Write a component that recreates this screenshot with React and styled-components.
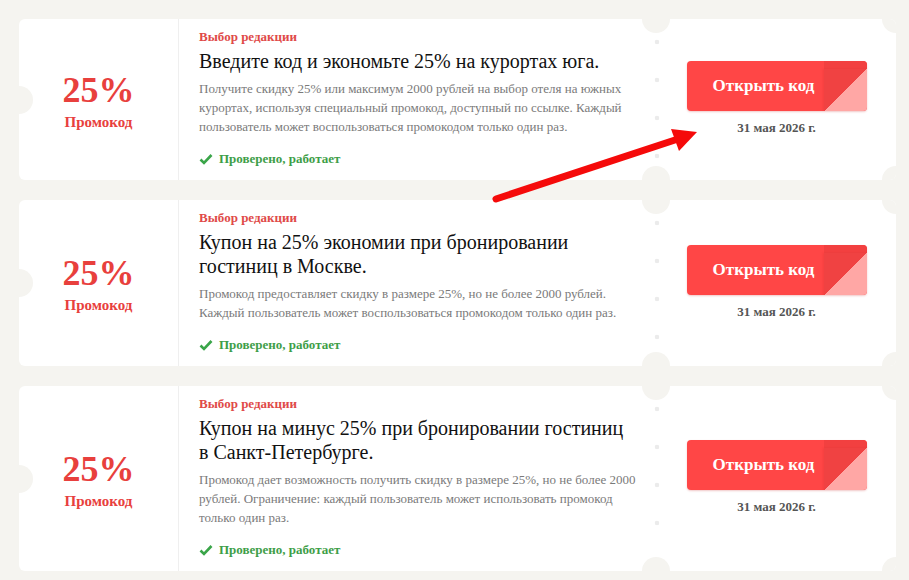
import React from "react";
import styled, { createGlobalStyle } from "styled-components";

const coupons = [
  {
    title: "Введите код и экономьте 25% на курортах юга.",
    text: "Получите скидку 25% или максимум 2000 рублей на выбор отеля на южных курортах, используя специальный промокод, доступный по ссылке. Каждый пользователь может воспользоваться промокодом только один раз.",
  },
  {
    title: "Купон на 25% экономии при бронировании гостиниц в Москве.",
    text: "Промокод предоставляет скидку в размере 25%, но не более 2000 рублей. Каждый пользователь может воспользоваться промокодом только один раз.",
  },
  {
    title: "Купон на минус 25% при бронировании гостиниц в Санкт-Петербурге.",
    text: "Промокод дает возможность получить скидку в размере 25%, но не более 2000 рублей. Ограничение: каждый пользователь может использовать промокод только один раз.",
  },
];

function App() {
  return (
    <Page>
      <GlobalStyle />
      {coupons.map((c, i) => (
        <Card key={i}>
          <Discount>
            <Percent>25%</Percent>
            <Kind>Промокод</Kind>
          </Discount>
          <Body>
            <Label>Выбор редакции</Label>
            <Title>{c.title}</Title>
            <Text>{c.text}</Text>
            <Verified>
              <svg width="14" height="12" viewBox="0 0 14 12">
                <polyline
                  points="1.5,6.5 5,10 12.5,2"
                  fill="none"
                  stroke="#3aa549"
                  strokeWidth="2.6"
                />
              </svg>
              Проверено, работает
            </Verified>
          </Body>
          <Side>
            <OpenButton>Открыть код</OpenButton>
            <Date>31 мая 2026 г.</Date>
          </Side>
          <Notch $x="0" $y="50%" />
          <Notch $x="637px" $y="0" />
          <Notch $x="637px" $y="100%" />
          <Notch $x="100%" $y="0" />
          <Notch $x="100%" $y="100%" />
        </Card>
      ))}
      <Arrow width="909" height="580" viewBox="0 0 909 580">
        <line
          x1="496"
          y1="199"
          x2="678"
          y2="139"
          stroke="#f50a0a"
          strokeWidth="7"
          strokeLinecap="round"
        />
        <polygon points="697,132 671,129 679,151" fill="#f50a0a" />
      </Arrow>
    </Page>
  );
}

export default App;

const GlobalStyle = createGlobalStyle`
  body {
    margin: 0;
    background: #f5f4f0;
    font-family: "Liberation Serif", "Times New Roman", serif;
  }
`;

const Page = styled.div`
  position: relative;
  width: 909px;
  height: 580px;
  box-sizing: border-box;
  padding: 19px 13px 0 19px;
  display: flex;
  flex-direction: column;
  gap: 20px;
  overflow: hidden;
`;

const Card = styled.div`
  position: relative;
  display: flex;
  background: #fff;
  border-radius: 6px;
  overflow: hidden;
`;

const Notch = styled.span`
  position: absolute;
  left: ${(p) => p.$x};
  top: ${(p) => p.$y};
  width: 28px;
  height: 28px;
  margin: -14px 0 0 -14px;
  border-radius: 50%;
  background: #f5f4f0;
`;

const Discount = styled.div`
  width: 159px;
  flex-shrink: 0;
  border-right: 1px solid #efefef;
  display: flex;
  flex-direction: column;
  align-items: center;
  justify-content: center;
  padding-top: 2px;
  color: #e8403d;
  font-weight: bold;
`;

const Percent = styled.div`
  font-size: 36px;
  line-height: 40px;
`;

const Kind = styled.div`
  font-size: 15px;
  line-height: 20px;
  margin-top: 2px;
`;

const Body = styled.div`
  width: 478px;
  box-sizing: border-box;
  padding: 9px 20px 11px 20px;
`;

const Label = styled.div`
  font-size: 13px;
  line-height: 18px;
  font-weight: bold;
  color: #e04a48;
`;

const Title = styled.div`
  margin-top: 3px;
  font-size: 20px;
  line-height: 24px;
  color: #111;
`;

const Text = styled.div`
  margin-top: 6px;
  font-size: 13px;
  line-height: 19px;
  color: #7a7a7a;
`;

const Verified = styled.div`
  margin-top: 13px;
  display: flex;
  align-items: center;
  gap: 6px;
  font-size: 13px;
  line-height: 20px;
  font-weight: bold;
  color: #3e9e48;
`;

const Side = styled.div`
  position: relative;
  flex: 1;
  display: flex;
  flex-direction: column;
  align-items: center;
  justify-content: center;
  padding-bottom: 1px;

  &:before {
    content: "";
    position: absolute;
    left: -3px;
    top: 0;
    bottom: 0;
    width: 6px;
    background-image: radial-gradient(circle, #ebebeb 2px, transparent 2.6px);
    background-size: 6px 38px;
    background-repeat: repeat-y;
    background-position: 0 4px;
  }
`;

const OpenButton = styled.div`
  position: relative;
  width: 180px;
  height: 50px;
  box-sizing: border-box;
  padding-right: 26px;
  border-radius: 4px;
  background: #ff4646;
  color: #fff;
  font-size: 17px;
  font-weight: bold;
  display: flex;
  align-items: center;
  justify-content: center;
  overflow: hidden;
  box-shadow: 0 1px 2px rgba(200, 40, 40, 0.25);

  &:before {
    content: "";
    position: absolute;
    right: 0;
    top: 0;
    width: 43px;
    height: 8px;
    background: #f24040;
  }

  &:after {
    content: "";
    position: absolute;
    right: 0;
    bottom: 0;
    width: 43px;
    height: 42px;
    background: linear-gradient(to top left, #ffa7a5 50%, #f04242 50%);
    box-shadow: -1px 0 2px rgba(180, 30, 30, 0.15);
  }
`;

const Date = styled.div`
  margin-top: 8px;
  font-size: 13px;
  line-height: 18px;
  font-weight: bold;
  color: #555;
`;

const Arrow = styled.svg`
  position: absolute;
  left: 0;
  top: 0;
  pointer-events: none;
`;
